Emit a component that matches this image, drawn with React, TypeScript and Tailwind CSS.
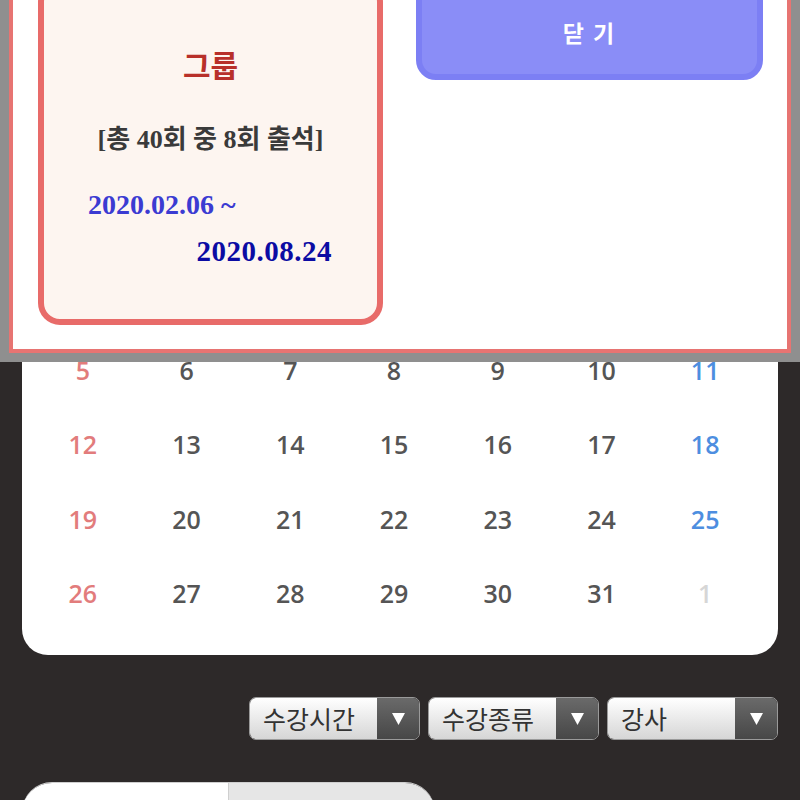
const WEEKS: number[][] = [
  [5, 6, 7, 8, 9, 10, 11],
  [12, 13, 14, 15, 16, 17, 18],
  [19, 20, 21, 22, 23, 24, 25],
  [26, 27, 28, 29, 30, 31, 1],
];

const SELECTS = ['수강시간', '수강종류', '강사'];

function dayColor(wi: number, di: number) {
  if (wi === 3 && di === 6) return 'text-[#d6d6d6]';
  if (di === 0) return 'text-[#e27c7c]';
  if (di === 6) return 'text-[#4d8ee0]';
  return 'text-[#555]';
}

export default function App() {
  return (
    <div className="relative w-[800px] h-[800px] overflow-hidden bg-[#2d2929]">
      {/* Calendar */}
      <div className="px-[22px]">
        <div className="bg-white rounded-b-[26px] pt-[333px] pb-[24px] pl-[9px] pr-[21px]">
          {WEEKS.map((w, wi) => (
            <div key={wi} className="grid grid-cols-7 h-[74.5px]">
              {w.map((d, di) => (
                <div key={di} className={`flex items-center justify-center text-[25px] font-semibold ${dayColor(wi, di)}`}
                  style={{ fontFamily: '"Open Sans", "Noto Sans", sans-serif' }}>
                  {d}
                </div>
              ))}
            </div>
          ))}
        </div>
      </div>

      {/* Filters */}
      <div className="mt-[42px] flex justify-end gap-2 pr-[22px]">
        {SELECTS.map(s => (
          <div key={s} className="w-[171px] h-[43px] flex rounded-[7px] overflow-hidden border border-[#9a9a9a]">
            <div className="flex-1 flex items-center pl-[13px] text-[25px] text-[#333] bg-gradient-to-b from-white to-[#d6d6d6]"
              style={{ fontFamily: '"Noto Sans CJK KR", sans-serif' }}>
              {s}
            </div>
            <div className="w-[42px] flex items-center justify-center bg-gradient-to-b from-[#6a6a6a] to-[#474747]">
              <svg width="13" height="12" viewBox="0 0 13 12"><polygon points="0,0 13,0 6.5,12" fill="#fff" /></svg>
            </div>
          </div>
        ))}
      </div>

      {/* Tabs */}
      <div className="mt-[42px] ml-[22px] w-[413px] h-[40px] flex rounded-t-[30px] overflow-hidden border-t border-[#cfcfcf]">
        <div className="flex-1 bg-white" />
        <div className="flex-1 bg-[#e6e6e6] border-l border-[#cfcfcf]" />
      </div>

      {/* Attendance modal */}
      <div className="absolute left-0 top-[-40px] w-[800px] h-[402px] border-[9px] border-[#8f8f8f]">
        <div className="h-full border-4 border-[#e77472] bg-white flex items-start pl-[25px] pt-[7px]">
          <div className="w-[345px] h-[345px] border-[6px] border-[#e86b69] rounded-[22px] bg-[#fdf5f0] flex flex-col"
            style={{ fontFamily: '"Liberation Serif", "Noto Sans CJK KR", serif' }}>
            <div className="pt-[63px] text-center text-[30px] leading-[36px] font-bold text-[#b8302a]">그룹</div>
            <div className="mt-[39px] text-center text-[26px] leading-[32px] font-bold text-[#3a3a3a]">[총 40회 중 8회 출석]</div>
            <div className="mt-[32px] ml-[44px] text-[28px] leading-[34px] font-bold text-[#3b3bd2]">2020.02.06 ~</div>
            <div className="mt-[12px] mr-[45px] self-end text-[29px] leading-[34px] font-bold tracking-[0.5px] text-[#0b0ba3]">2020.08.24</div>
          </div>
          <button className="ml-[33px] w-[347px] h-[100px] pt-[4px] rounded-[20px] border-[6px] border-[#7c7ff4] bg-[#8a8df7] text-white text-[23px] font-bold tracking-[2px]"
            style={{ fontFamily: '"Noto Sans CJK KR", sans-serif' }}>
            닫 기
          </button>
        </div>
      </div>
    </div>
  );
}
